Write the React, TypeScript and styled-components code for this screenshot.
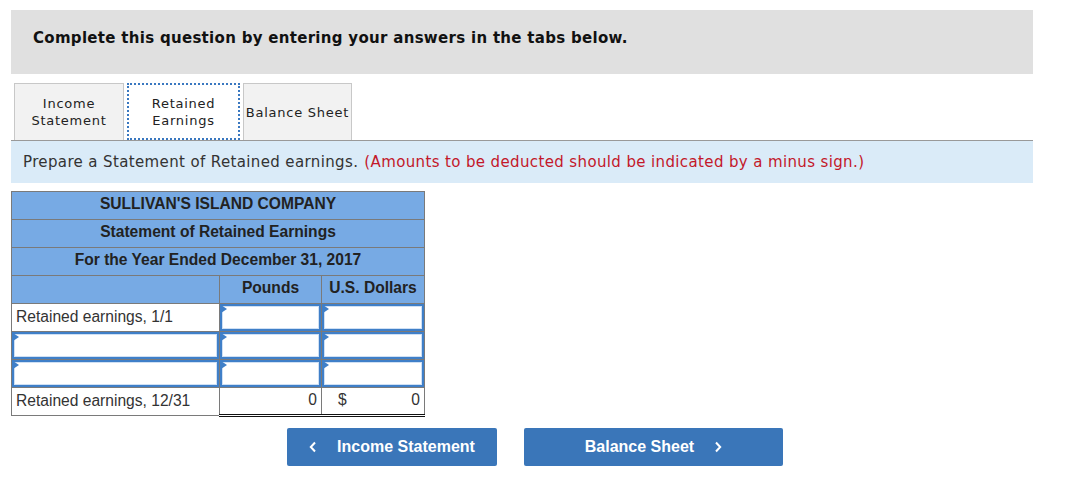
import React from 'react';
import styled, { createGlobalStyle } from 'styled-components';

const GlobalStyle = createGlobalStyle`
  body {
    margin: 0;
    background: #fff;
    font-family: "DejaVu Sans", Verdana, sans-serif;
  }
`;

const Page = styled.div`
  width: 1022px;
  padding: 10px 0 0 11px;
`;

const Banner = styled.div`
  background: #e0e0e0;
  height: 64px;
  box-sizing: border-box;
  display: flex;
  align-items: center;
  padding: 0 0 8px 22px;
  font-size: 15px;
  font-weight: 700;
  color: #111;
  letter-spacing: 0.3px;
`;

const Tabs = styled.div`
  display: flex;
  gap: 3px;
  margin-top: 9px;
  padding-left: 3px;
  border-bottom: 1px solid #999;
`;

const Tab = styled.div<{ $active?: boolean; $w: number }>`
  width: ${p => p.$w}px;
  height: 57px;
  box-sizing: border-box;
  display: flex;
  align-items: center;
  justify-content: center;
  text-align: center;
  font-size: 13px;
  line-height: 17px;
  letter-spacing: 0.75px;
  color: #222;
  background: ${p => (p.$active ? '#fff' : '#f2f2f2')};
  border: ${p => (p.$active ? '2px dotted #3a78c0' : '1px solid #c8c8c8')};
  border-bottom: ${p => (p.$active ? '2px dotted #3a78c0' : 'none')};
  margin-bottom: ${p => (p.$active ? '-2px' : '0')};
`;

const Instruction = styled.div`
  background: #daebf8;
  height: 42px;
  display: flex;
  align-items: center;
  padding-left: 12px;
  font-size: 15px;
  color: #333;
  letter-spacing: 0.37px;
`;

const Red = styled.span`
  color: #c3182a;
  margin-left: 6px;
`;

const Sheet = styled.table`
  margin-top: 8px;
  border-collapse: collapse;
  font-family: "Liberation Sans", Arial, sans-serif;
  font-size: 15.6px;
  color: #222;
  width: 413px;
  table-layout: fixed;
`;

const HeadCell = styled.td`
  background: #77aae4;
  border: 1px solid #7a7a7a;
  height: 24px;
  padding: 0 0 3px;
  text-align: center;
  font-weight: 700;
  color: #222;
`;

const LabelCell = styled.td`
  border: 1px solid #7a7a7a;
  height: 25px;
  padding: 0 0 2px 4px;
  background: #fff;
  color: #333;
`;

const InputCell = styled.td`
  border: 1px solid #7a7a7a;
  height: 27px;
  padding: 0;
`;

const Field = styled.div`
  height: 27px;
  box-sizing: border-box;
  border: 2px solid #3f7fc8;
  box-shadow: inset 0 0 0 1px #cfe0f4;
  background: #fff;
  position: relative;
  &::before {
    content: '';
    position: absolute;
    left: -1px;
    top: -1px;
    border-top: 4px solid transparent;
    border-bottom: 4px solid transparent;
    border-left: 6px solid #3f7fc8;
  }
`;

const TotalCell = styled.td`
  height: 24px;
  padding: 0 4px 2px 0;
  border-top: 1px solid #111;
  border-bottom: 3px double #111;
  border-left: 1px solid #7a7a7a;
  border-right: 1px solid #7a7a7a;
  text-align: right;
  color: #333;
`;

const Dollar = styled.span`
  float: left;
  margin-left: 16px;
`;

const Nav = styled.div`
  display: flex;
  gap: 27px;
  margin: 11px 0 0 276px;
`;

const NavButton = styled.div<{ $w: number }>`
  width: ${p => p.$w}px;
  height: 38px;
  background: #3a76b9;
  border-radius: 2px;
  color: #fff;
  font-family: "Liberation Sans", Arial, sans-serif;
  font-weight: 700;
  font-size: 16px;
  display: flex;
  align-items: center;
  justify-content: center;
  gap: 20px;
`;

const Chevron = ({ dir }: { dir: 'left' | 'right' }) => (
  <svg width="8" height="12" viewBox="0 0 8 12">
    <path
      d={dir === 'left' ? 'M6 1.5 L1.8 6 L6 10.5' : 'M2 1.5 L6.2 6 L2 10.5'}
      fill="none"
      stroke="#fff"
      strokeWidth="2"
    />
  </svg>
);

export default function App() {
  return (
    <Page>
      <GlobalStyle />
      <Banner>Complete this question by entering your answers in the tabs below.</Banner>
      <Tabs>
        <Tab $w={110}>Income<br />Statement</Tab>
        <Tab $w={113} $active>Retained<br />Earnings</Tab>
        <Tab $w={109}>Balance Sheet</Tab>
      </Tabs>
      <Instruction>
        Prepare a Statement of Retained earnings.
        <Red>(Amounts to be deducted should be indicated by a minus sign.)</Red>
      </Instruction>
      <Sheet>
        <colgroup>
          <col style={{ width: 208 }} />
          <col style={{ width: 102 }} />
          <col style={{ width: 103 }} />
        </colgroup>
        <tbody>
          <tr><HeadCell colSpan={3}>SULLIVAN'S ISLAND COMPANY</HeadCell></tr>
          <tr><HeadCell colSpan={3}>Statement of Retained Earnings</HeadCell></tr>
          <tr><HeadCell colSpan={3}>For the Year Ended December 31, 2017</HeadCell></tr>
          <tr>
            <HeadCell />
            <HeadCell>Pounds</HeadCell>
            <HeadCell>U.S. Dollars</HeadCell>
          </tr>
          <tr>
            <LabelCell>Retained earnings, 1/1</LabelCell>
            <InputCell><Field /></InputCell>
            <InputCell><Field /></InputCell>
          </tr>
          <tr>
            <InputCell><Field /></InputCell>
            <InputCell><Field /></InputCell>
            <InputCell><Field /></InputCell>
          </tr>
          <tr>
            <InputCell><Field /></InputCell>
            <InputCell><Field /></InputCell>
            <InputCell><Field /></InputCell>
          </tr>
          <tr>
            <LabelCell>Retained earnings, 12/31</LabelCell>
            <TotalCell>0</TotalCell>
            <TotalCell><Dollar>$</Dollar>0</TotalCell>
          </tr>
        </tbody>
      </Sheet>
      <Nav>
        <NavButton $w={210}><Chevron dir="left" />Income Statement</NavButton>
        <NavButton $w={259}>Balance Sheet<Chevron dir="right" /></NavButton>
      </Nav>
    </Page>
  );
}
